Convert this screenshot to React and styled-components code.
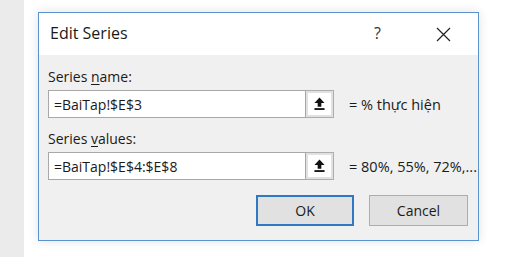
import React from "react";
import styled, { createGlobalStyle } from "styled-components";

const GlobalStyle = createGlobalStyle`
  body {
    margin: 0;
    background: #ffffff;
    font-family: "Open Sans", "Noto Sans", sans-serif;
  }
`;

const App = () => {
  return (
    <>
      <GlobalStyle />
      <Page>
        <Strip />
        <Stage>
          <Dialog>
            <TitleBar>
              <Title>Edit Series</Title>
              <TitleActions>
                <Help>?</Help>
                <Close>
                  <svg width="15" height="15" viewBox="0 0 15 15">
                    <path d="M1 1 L14 14 M14 1 L1 14" stroke="#222" strokeWidth="1.2" fill="none" />
                  </svg>
                </Close>
              </TitleActions>
            </TitleBar>
            <Body>
              <Label>
                Series <u>n</u>ame:
              </Label>
              <FieldRow>
                <Input>=BaiTap!$E$3</Input>
                <CollapseBtn>
                  <UploadIcon />
                </CollapseBtn>
                <Preview>= % thực hiện</Preview>
              </FieldRow>
              <Label $top={11}>
                Series <u>v</u>alues:
              </Label>
              <FieldRow>
                <Input>=BaiTap!$E$4:$E$8</Input>
                <CollapseBtn>
                  <UploadIcon />
                </CollapseBtn>
                <Preview>= 80%, 55%, 72%,...</Preview>
              </FieldRow>
              <Footer>
                <Button $primary>OK</Button>
                <Button>Cancel</Button>
              </Footer>
            </Body>
          </Dialog>
        </Stage>
      </Page>
    </>
  );
};

const UploadIcon = () => (
  <svg width="12" height="14" viewBox="0 0 12 14">
    <path d="M6 0 L11.5 6 L8 6 L8 10 L4 10 L4 6 L0.5 6 Z" fill="#111" />
    <rect x="0.5" y="11.5" width="11" height="2" fill="#111" />
  </svg>
);

export default App;

const Page = styled.div`
  display: flex;
  width: 523px;
  height: 257px;
  overflow: hidden;
`;

const Strip = styled.div`
  width: 24px;
  flex-shrink: 0;
  background: #ebebeb;
`;

const Stage = styled.div`
  flex: 1;
  padding: 12px 0 0 14px;
  background: #ffffff;
`;

const Dialog = styled.div`
  width: 441px;
  height: 229px;
  box-sizing: border-box;
  border: 1px solid #5a93cc;
  background: #f0f0f0;
  box-shadow: 0 0 10px rgba(0, 0, 0, 0.12);
  display: flex;
  flex-direction: column;
  overflow: hidden;
`;

const TitleBar = styled.div`
  height: 42px;
  flex-shrink: 0;
  background: #ffffff;
  display: flex;
  align-items: center;
  justify-content: space-between;
  padding: 0 27px 0 11px;
`;

const Title = styled.div`
  font-size: 16px;
  color: #1a1a1a;
  margin-top: -2px;
`;

const TitleActions = styled.div`
  display: flex;
  align-items: center;
  gap: 55px;
`;

const Help = styled.div`
  font-size: 16px;
  color: #333;
  margin-top: -2px;
`;

const Close = styled.div`
  display: flex;
`;

const Body = styled.div`
  flex: 1;
  padding: 12px 9px 0 9px;
  display: flex;
  flex-direction: column;
`;

const Label = styled.div`
  font-size: 14px;
  color: #1a1a1a;
  line-height: 19px;
  margin-top: ${(p) => p.$top || 0}px;
  margin-bottom: 4px;

  u {
    text-underline-offset: 2px;
  }
`;

const FieldRow = styled.div`
  display: flex;
  align-items: center;
  height: 28px;
`;

const Input = styled.div`
  width: 258px;
  height: 28px;
  flex-shrink: 0;
  box-sizing: border-box;
  border: 1px solid #a8a8a8;
  background: #ffffff;
  font-size: 14px;
  color: #1a1a1a;
  padding: 0 5px;
  display: flex;
  align-items: center;
`;

const CollapseBtn = styled.div`
  width: 28px;
  height: 28px;
  flex-shrink: 0;
  box-sizing: border-box;
  border: 1px solid #adadad;
  border-left: none;
  background: #e1e1e1;
  display: flex;
  align-items: center;
  justify-content: center;
  padding: 2px;

  svg {
    background: #ffffff;
    padding: 4px 6px;
  }
`;

const Preview = styled.div`
  margin-left: 15px;
  font-size: 14.5px;
  color: #1a1a1a;
  white-space: nowrap;
`;

const Footer = styled.div`
  display: flex;
  justify-content: flex-end;
  gap: 15px;
  margin-top: 15px;
  padding-right: 1px;
`;

const Button = styled.div`
  width: ${(p) => (p.$primary ? 98 : 99)}px;
  height: 31px;
  box-sizing: border-box;
  border: ${(p) => (p.$primary ? "2px solid #2f78c4" : "1px solid #adadad")};
  background: #e1e1e1;
  font-size: 14px;
  color: #1a1a1a;
  display: flex;
  align-items: center;
  justify-content: center;
`;
